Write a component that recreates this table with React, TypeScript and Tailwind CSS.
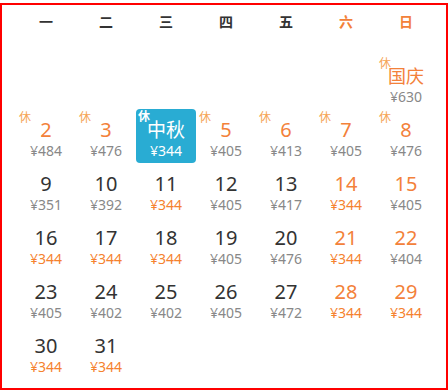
type Day = {
  label?: string;
  price?: string;
  rest?: boolean;
  hot?: boolean; // orange number (weekend / holiday)
  cheap?: boolean; // lowest price, orange
  active?: boolean;
  festival?: boolean;
};

const weekdays = ["一", "二", "三", "四", "五", "六", "日"];

const weeks: Day[][] = [
  [{}, {}, {}, {}, {}, {}, { label: "国庆", price: "630", rest: true, hot: true, festival: true }],
  [
    { label: "2", price: "484", rest: true, hot: true },
    { label: "3", price: "476", rest: true, hot: true },
    { label: "中秋", price: "344", rest: true, active: true, festival: true },
    { label: "5", price: "405", rest: true, hot: true },
    { label: "6", price: "413", rest: true, hot: true },
    { label: "7", price: "405", rest: true, hot: true },
    { label: "8", price: "476", rest: true, hot: true },
  ],
  [
    { label: "9", price: "351" },
    { label: "10", price: "392" },
    { label: "11", price: "344", cheap: true },
    { label: "12", price: "405" },
    { label: "13", price: "417" },
    { label: "14", price: "344", hot: true, cheap: true },
    { label: "15", price: "405", hot: true },
  ],
  [
    { label: "16", price: "344", cheap: true },
    { label: "17", price: "344", cheap: true },
    { label: "18", price: "344", cheap: true },
    { label: "19", price: "405" },
    { label: "20", price: "476" },
    { label: "21", price: "344", hot: true, cheap: true },
    { label: "22", price: "404", hot: true },
  ],
  [
    { label: "23", price: "405" },
    { label: "24", price: "402" },
    { label: "25", price: "402" },
    { label: "26", price: "405" },
    { label: "27", price: "472" },
    { label: "28", price: "344", hot: true, cheap: true },
    { label: "29", price: "344", hot: true, cheap: true },
  ],
  [{ label: "30", price: "344", cheap: true }, { label: "31", price: "344", cheap: true }, {}, {}, {}, {}, {}],
];

function Cell({ day }: { day: Day }) {
  if (!day.label) return <div className="h-[54px]" />;

  if (day.active) {
    return (
      <div className="relative flex h-[54px] flex-col items-center rounded-[4px] bg-[#29acd3] text-white">
        <span className="absolute left-[2px] top-[2px] text-[12px] font-bold leading-none">休</span>
        <span className="pt-[9px] text-[19px] leading-[24px]">{day.label}</span>
        <span className="text-[14px] leading-[18px]">¥{day.price}</span>
      </div>
    );
  }

  return (
    <div className="relative flex h-[54px] flex-col items-center">
      {day.rest && (
        <span className="absolute left-[3px] top-[3px] text-[12px] leading-none text-[#f5a455]">休</span>
      )}
      <span
        className={`pt-[9px] leading-[24px] ${day.festival ? "text-[18px]" : "text-[20px]"} ${
          day.hot ? "text-[#f3813a]" : "text-[#333]"
        }`}
      >
        {day.label}
      </span>
      <span className={`text-[14px] leading-[18px] ${day.cheap ? "text-[#f5822f]" : "text-[#888]"}`}>
        ¥{day.price}
      </span>
    </div>
  );
}

export default function App() {
  return (
    <div
      className="w-[448px] h-[390px] bg-white pt-[3px]"
      style={{ fontFamily: '"Noto Sans", "Noto Sans CJK SC", sans-serif' }}
    >
      <div className="h-[387px] border-2 border-[#f00] pl-[14px]">
        {/* week header */}
        <div className="grid grid-cols-[repeat(7,60px)] h-[32px] mb-[18px]">
          {weekdays.map((w, i) => (
            <div
              key={w}
              className={`flex items-center justify-center text-[14px] font-bold ${
                i >= 5 ? "text-[#f3813a]" : "text-[#333]"
              }`}
            >
              {w}
            </div>
          ))}
        </div>

        <div className="grid grid-cols-[repeat(7,60px)]">
          {weeks.flat().map((d, i) => (
            <Cell key={i} day={d} />
          ))}
        </div>
      </div>
    </div>
  );
}
